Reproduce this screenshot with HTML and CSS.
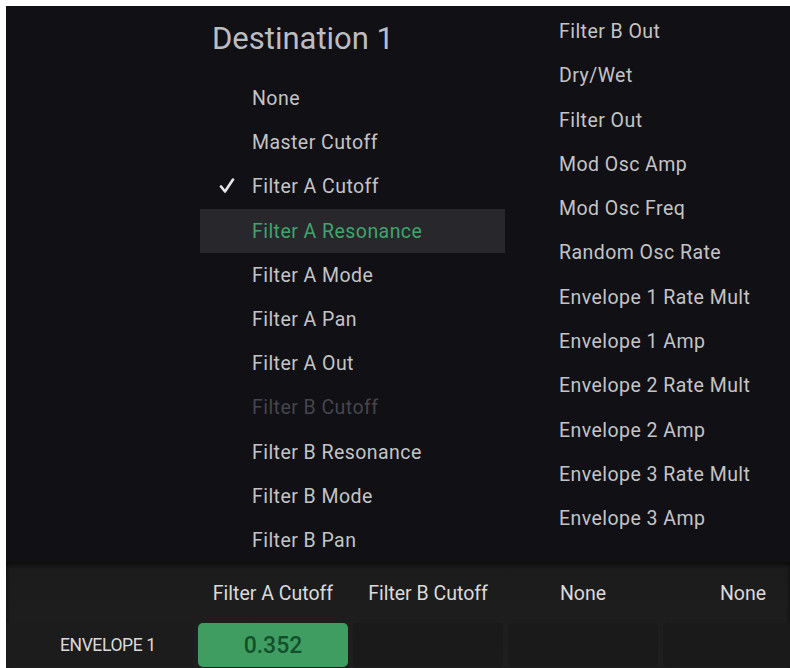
FILE: index.html
```html
<!DOCTYPE html>
<html lang="en">
<head>
  <meta charset="UTF-8">
  <meta name="viewport" content="width=device-width, initial-scale=1.0">
  <title>Mod Matrix - Destination</title>
  <link rel="stylesheet" href="styles.css">
</head>
<body>
  <!-- Synth screen -->
  <div class="screen">

    <!-- Destination picker -->
    <div class="menu">
      <div class="menu-col">
        <h1 class="menu-title">Destination 1</h1>
        <ul class="menu-list">
          <li class="item">None</li>
          <li class="item">Master Cutoff</li>
          <li class="item checked">
            <svg class="check" viewBox="0 0 16 16" width="16" height="16">
              <path d="M2 8.5 L6 13.5 L14 1.5" fill="none" stroke="#e6e6e6" stroke-width="2.6" stroke-linecap="round" stroke-linejoin="round"/>
            </svg>
            Filter A Cutoff
          </li>
          <li class="item active">Filter A Resonance</li>
          <li class="item">Filter A Mode</li>
          <li class="item">Filter A Pan</li>
          <li class="item">Filter A Out</li>
          <li class="item disabled">Filter B Cutoff</li>
          <li class="item">Filter B Resonance</li>
          <li class="item">Filter B Mode</li>
          <li class="item">Filter B Pan</li>
        </ul>
      </div>

      <ul class="menu-list second">
        <li class="item">Filter B Out</li>
        <li class="item">Dry/Wet</li>
        <li class="item">Filter Out</li>
        <li class="item">Mod Osc Amp</li>
        <li class="item">Mod Osc Freq</li>
        <li class="item">Random Osc Rate</li>
        <li class="item">Envelope 1 Rate Mult</li>
        <li class="item">Envelope 1 Amp</li>
        <li class="item">Envelope 2 Rate Mult</li>
        <li class="item">Envelope 2 Amp</li>
        <li class="item">Envelope 3 Rate Mult</li>
        <li class="item">Envelope 3 Amp</li>
      </ul>
    </div>

    <!-- Mod matrix strip -->
    <div class="matrix">
      <div class="cell head"></div>
      <div class="cell head">Filter A Cutoff</div>
      <div class="cell head">Filter B Cutoff</div>
      <div class="cell head">None</div>
      <div class="cell head last">None</div>

      <div class="cell label">ENVELOPE 1</div>
      <div class="cell amount on">0.352</div>
      <div class="cell amount"></div>
      <div class="cell amount"></div>
      <div class="cell amount"></div>
    </div>
  </div>
</body>
</html>
```

FILE: styles.css
```css
/* Page */
body {
  margin: 0;
  background: #ffffff;
  font-family: Roboto, "Liberation Sans", sans-serif;
  overflow: hidden;
}

.screen {
  margin: 6px 0 0 6px;
  width: 784px;
  height: 662px;
  background: #111015;
  overflow: hidden;
  display: flex;
  flex-direction: column;
}

/* Destination menu */
.menu {
  display: flex;
  gap: 54px;
  height: 556px;
  flex-shrink: 0;
}

.menu-col {
  margin-left: 194px;
  width: 305px;
  flex-shrink: 0;
}

.menu-title {
  margin: 0;
  height: 70px;
  box-sizing: border-box;
  padding: 15px 0 0 12px;
  font-size: 31px;
  line-height: 36px;
  font-weight: 400;
  color: #bdbdc0;
}

.menu-list {
  list-style: none;
  margin: 0;
  padding: 0;
}

.menu-list.second {
  padding-top: 3px;
}

.item {
  position: relative;
  height: 44.2px;
  line-height: 45px;
  padding-left: 52px;
  font-size: 19.5px;
  letter-spacing: 0.45px;
  color: #c4c4c6;
  white-space: nowrap;
}

.second .item {
  height: 44.3px;
  padding-left: 0;
}

.item.active {
  background: #28272c;
  color: #3ea56b;
}

.item.disabled {
  color: #46454b;
}

.check {
  position: absolute;
  left: 19px;
  top: 14px;
}

/* Matrix strip */
.matrix {
  flex: 1;
  display: grid;
  grid-template-columns: 187px repeat(4, 150px);
  grid-template-rows: 61px 44px;
  column-gap: 5px;
  background: linear-gradient(#1b1b1c, #1f1f20);
  box-shadow: inset 0 3px 4px rgba(0, 0, 0, 0.6);
}

.cell {
  display: flex;
  align-items: center;
  justify-content: center;
  color: #dadada;
  font-size: 19.5px;
  white-space: nowrap;
}

.cell.head {
  padding-top: 2px;
}

.cell.head.last {
  padding-left: 10px;
}

.cell.label {
  justify-content: flex-start;
  padding-left: 54px;
  font-size: 17.5px;
  letter-spacing: -0.4px;
  background: #1c1c1d;
}

.cell.amount {
  background: #1a1a1b;
  border-radius: 5px;
}

.cell.amount.on {
  background: #3f9d62;
  color: #14502b;
  font-size: 23px;
  font-weight: 500;
}
```
